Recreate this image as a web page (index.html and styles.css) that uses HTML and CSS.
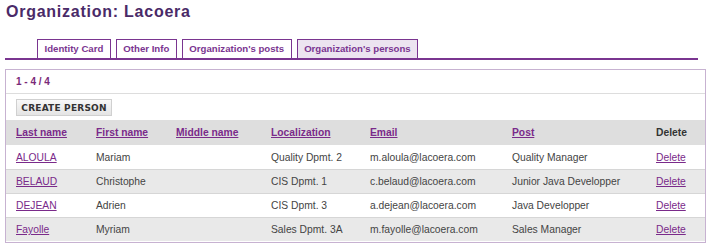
FILE: index.html
```html
<!DOCTYPE html>
<html>
<head>
<meta charset="utf-8">
<link rel="stylesheet" href="styles.css">
</head>
<body>
<h1 class="title">Organization: Lacoera</h1>
<ul class="tabs">
  <li class="tab">Identity Card</li>
  <li class="tab">Other Info</li>
  <li class="tab">Organization's posts</li>
  <li class="tab active">Organization's persons</li>
</ul>
<div class="panel">
  <div class="count">1 - 4 / 4</div>
  <div class="toolbar"><button class="btn">CREATE PERSON</button></div>
  <table class="grid">
    <thead>
      <tr>
        <th class="c1"><a href="#">Last name</a></th>
        <th class="c2"><a href="#">First name</a></th>
        <th class="c3"><a href="#">Middle name</a></th>
        <th class="c4"><a href="#">Localization</a></th>
        <th class="c5"><a href="#">Email</a></th>
        <th class="c6"><a href="#">Post</a></th>
        <th class="c7">Delete</th>
      </tr>
    </thead>
    <tbody>
      <tr><td><a href="#">ALOULA</a></td><td>Mariam</td><td></td><td>Quality Dpmt. 2</td><td>m.aloula@lacoera.com</td><td>Quality Manager</td><td><a href="#">Delete</a></td></tr>
      <tr><td><a href="#">BELAUD</a></td><td>Christophe</td><td></td><td>CIS Dpmt. 1</td><td>c.belaud@lacoera.com</td><td>Junior Java Developper</td><td><a href="#">Delete</a></td></tr>
      <tr><td><a href="#">DEJEAN</a></td><td>Adrien</td><td></td><td>CIS Dpmt. 3</td><td>a.dejean@lacoera.com</td><td>Java Developper</td><td><a href="#">Delete</a></td></tr>
      <tr><td><a href="#">Fayolle</a></td><td>Myriam</td><td></td><td>Sales Dpmt. 3A</td><td>m.fayolle@lacoera.com</td><td>Sales Manager</td><td><a href="#">Delete</a></td></tr>
    </tbody>
  </table>
</div>
</body>
</html>
```
FILE: styles.css
```css
html, body { margin: 0; padding: 0; background: #fff; }
body {
  font-family: "Liberation Sans", Arial, sans-serif;
  font-size: 10.3px;
  color: #444;
  padding: 0 5px;
}
.title {
  margin: 0;
  padding: 2px 0 0 1px;
  font-size: 16px;
  line-height: 20px;
  font-weight: bold;
  letter-spacing: 0.75px;
  color: #4a2a68;
}
.tabs {
  list-style: none;
  margin: 17px 8px 0 0;
  padding: 0 0 0 32px;
  display: flex;
  gap: 5px;
  border-bottom: 2px solid #7a3590;
  height: 19px;
  align-items: flex-end;
}
.tab {
  box-sizing: border-box;
  height: 21px;
  margin-bottom: -2px;
  border: 1px solid #7a3590;
  border-bottom: 2px solid #7a3590;
  background: #fff;
  color: #7a3590;
  font-weight: bold;
  font-size: 9.65px;
  line-height: 17px;
  padding: 0 6.5px;
}
.tab.active { background: #ece4f0; }
.panel {
  margin-top: 9px;
  border: 1px solid #c7b2d1;
  height: 172px;
}
.count {
  height: 23px;
  line-height: 24px;
  padding-left: 10px;
  font-size: 10px;
  font-weight: bold;
  color: #7a2a78;
  border-bottom: 1px solid #ddd;
}
.toolbar { padding: 5px 10px 4px; height: 17px; }
.btn {
  display: block;
  box-sizing: border-box;
  height: 17px;
  width: 96px;
  padding: 0;
  border: 1px solid #d0d0d0;
  background: linear-gradient(#f8f8f8, #e4e4e4);
  font-family: "DejaVu Sans", Verdana, sans-serif;
  font-weight: bold;
  font-size: 9px;
  color: #333;
  letter-spacing: 0.2px;
}
.grid {
  width: 100%;
  border-collapse: collapse;
  table-layout: fixed;
}
.grid th, .grid td {
  text-align: left;
  padding: 0 0 0 10px;
  height: 24px;
  white-space: nowrap;
  overflow: hidden;
}
.grid th { height: 25px; background: #dedede; font-weight: bold; color: #333; }
.grid a { color: #7a2a8a; }
.c1 { width: 70px; }
.c2 { width: 70px; }
.c3 { width: 85px; }
.c4 { width: 89px; }
.c5 { width: 132px; }
.c6 { width: 134px; }
.grid tbody tr { border-top: 1px solid #d6d6d6; }
.grid tbody tr:first-child { border-top: 0; }
.grid tbody tr:nth-child(even) td { background: #e9e9e9; }
.grid td { height: 23px; }
.grid tbody tr:first-child td { height: 24px; }
```
